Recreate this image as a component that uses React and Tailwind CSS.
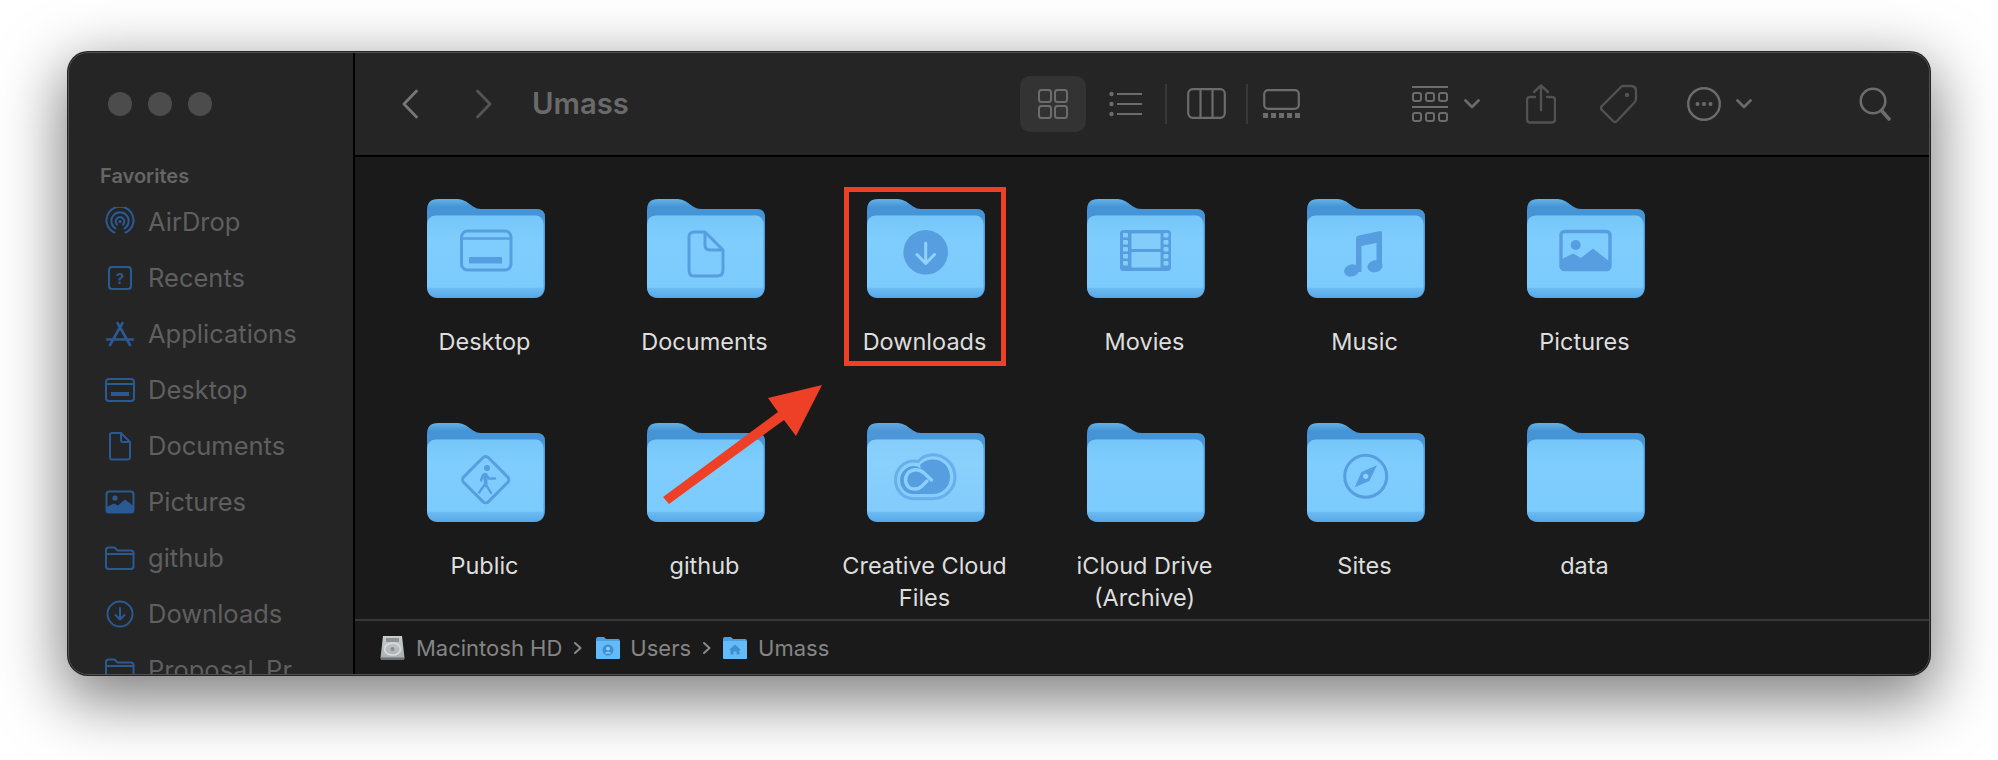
import React from "react";

const F = { fontFamily: "Inter, 'Noto Sans', sans-serif" };
const BLUE = "#2a5a94";
const G = "#6c6c6c";
const D = "#525252";
const I = "#569ee0";

function Glyph({ name }) {
  switch (name) {
    case "desktop":
      return (
        <g fill="none" stroke={I} strokeWidth="3">
          <rect x="34.5" y="32" width="49.5" height="39" rx="6" />
          <path d="M35 39.5H84" strokeWidth="2.4" />
          <rect x="42" y="58" width="33" height="6.6" rx="1.2" fill={I} stroke="none" />
        </g>
      );
    case "doc":
      return (
        <g fill="none" stroke={I} strokeWidth="3" strokeLinejoin="round">
          <path d="M47 33H58L76 51V71Q76 77 70 77H47Q42 77 42 71V38Q42 33 47 33Z" />
          <path d="M58 34V46Q58 51 63 51H75" />
        </g>
      );
    case "download":
      return (
        <g>
          <circle cx="58.7" cy="53.3" r="22.3" fill={I} />
          <path d="M58.7 44V64M50 55.5L58.7 64.5L67.5 55.5" fill="none" stroke="#8ed3ff" strokeWidth="3" strokeLinecap="round" strokeLinejoin="round" />
        </g>
      );
    case "movie":
      return (
        <g>
          <rect x="33" y="31" width="51" height="41" rx="3.5" fill={I} />
          <rect x="44.5" y="34.5" width="29" height="15.5" fill="#84cdfb" />
          <rect x="44.5" y="53" width="29" height="15.5" fill="#84cdfb" />
          {[34, 41, 48, 55, 62].map((y) => (
            <g key={y} fill="#84cdfb">
              <rect x="36" y={y} width="5" height="4.6" rx="1" />
              <rect x="76.5" y={y} width="5" height="4.6" rx="1" />
            </g>
          ))}
        </g>
      );
    case "music":
      return (
        <g fill={I}>
          <path d="M49 40Q49 37 52 36.6L73 32Q75 31.6 75 34V69H69.5V44L54.5 47V73H49Z" />
          <ellipse cx="44.6" cy="71.5" rx="7.6" ry="6" transform="rotate(-15 44.6 71.5)" />
          <ellipse cx="68" cy="67.3" rx="7.6" ry="6" transform="rotate(-15 68 67.3)" />
        </g>
      );
    case "picture":
      return (
        <g>
          <rect x="34" y="32.5" width="49" height="38" rx="3.5" fill="none" stroke={I} strokeWidth="3.4" />
          <circle cx="48.7" cy="46" r="5" fill={I} />
          <path d="M35 60L46 54.5L54 59L66 49.5L83 63V70H35Z" fill={I} />
        </g>
      );
    case "public":
      return (
        <g>
          <rect x="41.2" y="39.2" width="35" height="35" rx="4" transform="rotate(45 58.7 56.7)" fill="none" stroke={I} strokeWidth="3" />
          <circle cx="60" cy="45" r="3" fill={I} />
          <path d="M58 51L58.5 63M60 53L62 55.5H68M57.5 62L52 69.5M58.5 60.5L64 70M56 52L54 57.5" fill="none" stroke={I} strokeWidth="2.4" strokeLinecap="round" />
          <path d="M56 50.5H60.5L60.5 62H57Z" fill={I} />
        </g>
      );
    case "cc":
      return (
        <g>
          <path d="M46 75.7C36 75.7 28.5 67 28.5 57C28.5 46 37 38 47 38C49 38 50 38.3 51 38.6C55 34 60 31.7 66 31.7C78 31.7 88 41.5 88 54C88 66 78 75.7 66 75.7Z" fill="none" stroke="#67b0ea" strokeWidth="3" />
          <path d="M53 42C57 38 61 36.5 66 36.5C76 36.5 83 44 83 54C83 64 75 71 66 71H46C38 71 33 64 33 57C33 49 40 43 47 43C50 43 52 44 54 46Z" fill={I} />
          <path d="M64.5 57L57 50C52 45.5 45 46 41 50C37 55 38 62 43 65C48 67 52 66 55 63L60 58" fill="none" stroke="#8bd0ff" strokeWidth="3.4" strokeLinecap="round" />
        </g>
      );
    case "compass":
      return (
        <g>
          <circle cx="58.7" cy="53.3" r="21" fill="none" stroke={I} strokeWidth="3" />
          <path d="M70 42.3L62.5 58L47.7 64.3L54.5 49Z" fill={I} />
          <circle cx="58.7" cy="53.3" r="2.6" fill="#8ed3ff" />
        </g>
      );
    default:
      return null;
  }
}

function Folder({ id, glyph, light }) {
  return (
    <svg width="118" height="99" viewBox="0 0 118 99" className="block shrink-0">
      <defs>
        <linearGradient id={`b${id}`} x1="0" y1="0" x2="0" y2="1">
          <stop offset="0" stopColor={light ? "#64a9de" : "#63b2e6"} />
          <stop offset="0.2" stopColor={light ? "#4d97d8" : "#4594d6"} />
          <stop offset="1" stopColor="#4594d6" />
        </linearGradient>
        <linearGradient id={`f${id}`} x1="0" y1="0" x2="0" y2="1">
          <stop offset="0" stopColor={light ? "#86cdfb" : "#76c6f9"} />
          <stop offset="0.3" stopColor={light ? "#8ad0fd" : "#7ecdfd"} />
          <stop offset="0.87" stopColor={light ? "#82cbfb" : "#7ccbfd"} />
          <stop offset="0.88" stopColor="#6cbcf3" />
          <stop offset="1" stopColor="#55a7e5" />
        </linearGradient>
      </defs>
      <path d="M0 11Q0 0 11 0H31Q35 0 39 2.5L46 7.5Q50 10 54 10H110Q118 10 118 18V40H0Z" fill={`url(#b${id})`} />
      <path d="M0 26Q0 17 9 16.5H109Q117 17 118 26V87Q118 99 106 99H12Q0 99 0 87Z" fill="#4ea0e2" />
      <path d="M0 26Q0 17 9 16.5H109Q116 17 116.5 26V87Q118 99 106 99H12Q0 99 0 87Z" fill={`url(#f${id})`} />
      <Glyph name={glyph} />
    </svg>
  );
}

const items = [
  { n: "Desktop", g: "desktop" },
  { n: "Documents", g: "doc" },
  { n: "Downloads", g: "download" },
  { n: "Movies", g: "movie" },
  { n: "Music", g: "music" },
  { n: "Pictures", g: "picture" },
  { n: "Public", g: "public" },
  { n: "github" },
  { n: "Creative Cloud Files", g: "cc", light: true },
  { n: "iCloud Drive (Archive)" },
  { n: "Sites", g: "compass" },
  { n: "data" },
];

function SideIcon({ name }) {
  const p = { fill: "none", stroke: BLUE, strokeWidth: 2, strokeLinecap: "round", strokeLinejoin: "round" };
  let c = null;
  if (name === "air")
    c = (
      <g {...p}>
        <path d="M9.5 25.5A13.5 13.5 0 1 1 20.5 25.5" />
        <path d="M10.5 21.5A8.7 8.7 0 1 1 19.5 21.5" />
        <path d="M12 17.5A4.3 4.3 0 1 1 18 17.5" />
        <circle cx="15" cy="14.5" r="1.5" fill={BLUE} stroke="none" />
      </g>
    );
  if (name === "recent")
    c = (
      <g>
        <rect x="4" y="4" width="22" height="22" rx="3" {...p} />
        <text x="15" y="21" textAnchor="middle" fontSize="15" fontWeight="700" fill={BLUE} style={F}>?</text>
      </g>
    );
  if (name === "app")
    c = (
      <g {...p} strokeWidth="2.6">
        <path d="M17.5 4L5 26M12.5 4L25 26M2 20.5H28" />
      </g>
    );
  if (name === "desk")
    c = (
      <g {...p}>
        <rect x="1" y="4" width="28" height="22" rx="3" />
        <path d="M1 9H29" />
        <rect x="6" y="17" width="18" height="4" fill={BLUE} stroke="none" />
      </g>
    );
  if (name === "doc")
    c = (
      <g {...p}>
        <path d="M7 2H16L25 11V26Q25 28.5 22 28.5H7Q5 28.5 5 26V4Q5 2 7 2Z" />
        <path d="M16 2.5V9Q16 11 18 11H24.5" />
      </g>
    );
  if (name === "pic")
    c = (
      <g>
        <rect x="1.5" y="4.5" width="27" height="21" rx="2.5" {...p} />
        <circle cx="10" cy="11" r="2.6" fill={BLUE} />
        <path d="M1.5 20L9 16.5L13 18.5L20 12.5L28.5 19V24Q28.5 26 26 26H4Q1.5 26 1.5 24Z" fill={BLUE} />
      </g>
    );
  if (name === "folder")
    c = (
      <g {...p}>
        <path d="M1 9V7Q1 4.5 3.5 4.5H9.5L12.5 7.5H26Q28.5 7.5 28.5 10V23Q28.5 26 26 26H3.5Q1 26 1 23Z" />
        <path d="M1 11H28.5" />
      </g>
    );
  if (name === "dl")
    c = (
      <g {...p}>
        <circle cx="15" cy="15" r="12.5" />
        <path d="M15 9V20M10.5 16L15 20.5L19.5 16" />
      </g>
    );
  return (
    <svg width="30" height="30" viewBox="0 0 30 30" className="shrink-0 block">
      {c}
    </svg>
  );
}

const side = [
  ["air", "AirDrop"],
  ["recent", "Recents"],
  ["app", "Applications"],
  ["desk", "Desktop"],
  ["doc", "Documents"],
  ["pic", "Pictures"],
  ["folder", "github"],
  ["dl", "Downloads"],
  ["folder", "Proposal_Pr"],
];

function Chevron({ color, className }) {
  return (
    <svg width="16" height="10" viewBox="0 0 16 10" className={className}>
      <path d="M1.5 1.5L8 8L14.5 1.5" fill="none" stroke={color} strokeWidth="2.6" strokeLinecap="round" strokeLinejoin="round" />
    </svg>
  );
}

function MiniFolder({ glyph }) {
  return (
    <svg width="24" height="24" viewBox="0 0 24 24" className="shrink-0 block">
      <path d="M0 3Q0 1 2 1H8L10 3H22Q24 3 24 5V8H0Z" fill="#4b9fe3" />
      <path d="M0 5H24V22Q24 23 23 23H1Q0 23 0 22Z" fill="#63bbf8" />
      {glyph === "user" ? (
        <g>
          <circle cx="12" cy="14" r="5.5" fill="#3f8fd2" />
          <circle cx="12" cy="12.6" r="1.9" fill="#8ed3ff" />
          <path d="M8.5 17.5Q12 13.8 15.5 17.5Z" fill="#8ed3ff" />
        </g>
      ) : (
        <path d="M12 8.5L18 14H16.5V18.5H13.5V15.5H10.5V18.5H7.5V14H6Z" fill="#3f8fd2" />
      )}
    </svg>
  );
}

function Crumb({ className }) {
  return (
    <svg width="10" height="14" viewBox="0 0 10 14" className={className}>
      <path d="M2 2L7.5 7L2 12" fill="none" stroke="#8a8a8a" strokeWidth="2" strokeLinecap="round" strokeLinejoin="round" />
    </svg>
  );
}

export default function App() {
  return (
    <div className="relative w-[1998px] h-[760px] bg-white overflow-hidden pl-[68px] pt-[52px]" style={F}>
      <div className="relative flex w-[1862px] h-[623px] rounded-[20px] overflow-hidden bg-[#1a1a1a] shadow-[0_0_0_1px_#242424,0_20px_62px_6px_rgba(0,0,0,0.5)]">
        {/* Sidebar */}
        <aside className="w-[287px] shrink-0 bg-[#252525] border-r-2 border-black pt-[40px] overflow-hidden">
          <div className="flex gap-4 pl-[40px]">
            <div className="w-6 h-6 rounded-full bg-[#4c4c4c]" />
            <div className="w-6 h-6 rounded-full bg-[#4c4c4c]" />
            <div className="w-6 h-6 rounded-full bg-[#4c4c4c]" />
          </div>
          <div className="mt-[46px] pl-[32px] h-7 leading-7 text-[20px] font-semibold text-[#666666]">Favorites</div>
          <div className="mt-1">
            {side.map(([ic, t], i) => (
              <div key={i} className="flex items-center h-14 pl-[37px] gap-[13px]">
                <SideIcon name={ic} />
                <span className="text-[25.5px] text-[#5f5f5f] whitespace-nowrap">{t}</span>
              </div>
            ))}
          </div>
        </aside>

        <div className="flex-1 min-w-0 flex flex-col">
          {/* Toolbar */}
          <header className="h-[105px] shrink-0 flex items-center bg-[#252525] border-b-2 border-black pr-[39px]">
            <svg width="18" height="30" viewBox="0 0 18 30" className="ml-[46px] shrink-0">
              <path d="M15.5 2L3 15L15.5 28" fill="none" stroke="#777777" strokeWidth="2.8" strokeLinecap="round" strokeLinejoin="round" />
            </svg>
            <svg width="18" height="30" viewBox="0 0 18 30" className="ml-[56px] shrink-0">
              <path d="M2.5 2L15 15L2.5 28" fill="none" stroke="#555555" strokeWidth="2.8" strokeLinecap="round" strokeLinejoin="round" />
            </svg>
            <div className="ml-[39px] flex-1 text-[29.3px] font-semibold text-[#6a6a6a]">Umass</div>

            <div className="w-[66px] h-14 rounded-[10px] bg-[#333333] flex items-center justify-center shrink-0">
              <svg width="30" height="30" viewBox="0 0 30 30">
                <g fill="none" stroke={G} strokeWidth="2">
                  <rect x="1" y="1" width="12" height="12" rx="2.5" />
                  <rect x="17" y="1" width="12" height="12" rx="2.5" />
                  <rect x="1" y="17" width="12" height="12" rx="2.5" />
                  <rect x="17" y="17" width="12" height="12" rx="2.5" />
                </g>
              </svg>
            </div>
            <svg width="33" height="26" viewBox="0 0 33 26" className="ml-[23px] shrink-0">
              <g fill={G}>
                <circle cx="2.5" cy="3" r="2.2" />
                <circle cx="2.5" cy="13" r="2.2" />
                <circle cx="2.5" cy="23" r="2.2" />
                <rect x="8" y="2" width="25" height="2" />
                <rect x="8" y="12" width="25" height="2" />
                <rect x="8" y="22" width="25" height="2" />
              </g>
            </svg>
            <div className="ml-[23px] w-[2px] h-10 bg-[#383838] shrink-0" />
            <svg width="39" height="31" viewBox="0 0 39 31" className="ml-5 shrink-0">
              <g fill="none" stroke={G} strokeWidth="2.2">
                <rect x="1.2" y="1.2" width="36.6" height="28.6" rx="4.5" />
                <path d="M13.5 1V30M25.5 1V30" />
              </g>
            </svg>
            <div className="ml-5 w-[2px] h-10 bg-[#383838] shrink-0" />
            <svg width="37" height="29" viewBox="0 0 37 29" className="ml-[15px] shrink-0">
              <rect x="1.2" y="1.2" width="34.6" height="18.6" rx="4" fill="none" stroke={G} strokeWidth="2.2" />
              <g fill={G}>
                {[0, 8, 16, 24, 32].map((x) => (
                  <rect key={x} x={x} y="24" width="5" height="5" />
                ))}
              </g>
            </svg>
            <svg width="36" height="37" viewBox="0 0 36 37" className="ml-[112px] shrink-0">
              <g fill="none" stroke={D} strokeWidth="2">
                <path d="M0 2H36M0 22H36" strokeWidth="2" stroke={G} />
                {[0, 13, 26].map((x) => (
                  <g key={x}>
                    <rect x={x + 1} y="8" width="8" height="8" rx="2" stroke={G} />
                    <rect x={x + 1} y="28" width="8" height="8" rx="2" stroke={G} />
                  </g>
                ))}
              </g>
            </svg>
            <Chevron color={G} className="ml-4 shrink-0" />
            <svg width="30" height="40" viewBox="0 0 30 40" className="ml-[46px] shrink-0">
              <g fill="none" stroke={D} strokeWidth="2.4" strokeLinecap="round" strokeLinejoin="round">
                <path d="M9 13H4Q1 13 1 16V35Q1 38.5 4 38.5H26Q29 38.5 29 35V16Q29 13 26 13H21" />
                <path d="M15 26V2M8 8L15 1.5L22 8" />
              </g>
            </svg>
            <svg width="38" height="40" viewBox="0 0 38 40" className="ml-[44px] shrink-0">
              <g fill="none" stroke={D} strokeWidth="2.4" strokeLinejoin="round">
                <path d="M23 2H31Q36 2 36 7V15Q36 17 34 19L17 37Q15 39 13 37L2 26Q0 24 2 22L20 4Q21 2 23 2Z" />
              </g>
              <circle cx="27" cy="11" r="2.2" fill={D} />
            </svg>
            <svg width="34" height="36" viewBox="0 0 34 36" className="ml-[49px] shrink-0">
              <circle cx="17" cy="18" r="15.8" fill="none" stroke={G} strokeWidth="2.4" />
              <g fill={G}>
                <circle cx="10.5" cy="18" r="2" />
                <circle cx="17" cy="18" r="2" />
                <circle cx="23.5" cy="18" r="2" />
              </g>
            </svg>
            <Chevron color={G} className="ml-[15px] shrink-0" />
            <svg width="32" height="36" viewBox="0 0 32 36" className="ml-[107px] shrink-0">
              <circle cx="14" cy="15" r="12.3" fill="none" stroke={G} strokeWidth="2.6" />
              <path d="M22.5 24.5L30 33" stroke={G} strokeWidth="3.6" strokeLinecap="round" />
            </svg>
          </header>

          {/* Icon grid */}
          <main className="flex-1 min-h-0 overflow-hidden pl-[21px] pt-[42px] grid grid-cols-[repeat(6,220px)] auto-rows-[224px]">
            {items.map((it, i) => (
              <div key={i} className="flex flex-col items-center">
                <Folder id={i} glyph={it.g} light={it.light} />
                <div className="mt-7 w-[180px] pr-[3px] text-center text-[23.5px] leading-8 font-normal text-[#dedede]">{it.n}</div>
              </div>
            ))}
          </main>

          {/* Path bar */}
          <footer className="h-[56px] shrink-0 flex items-center border-t-2 border-[#383838] bg-[#1a1a1a] pl-[25px] text-[22px] text-[#858585]">
            <svg width="25" height="26" viewBox="0 0 25 26" className="shrink-0 block">
              <defs>
                <linearGradient id="hd" x1="0" y1="0" x2="0" y2="1">
                  <stop offset="0" stopColor="#c9cccd" />
                  <stop offset="1" stopColor="#a7adb0" />
                </linearGradient>
              </defs>
              <path d="M3 1H22L24.5 23Q24.5 25 22.5 25H2.5Q0.5 25 0.5 23Z" fill="url(#hd)" />
              <rect x="6" y="3" width="13" height="4" fill="#8d9194" />
              <ellipse cx="12.5" cy="14" rx="8" ry="6" fill="none" stroke="#d9dcdd" strokeWidth="1.6" />
              <circle cx="12.5" cy="14" r="2" fill="#888c8f" />
              <rect x="1" y="22.5" width="23" height="2.5" fill="#6c7073" />
            </svg>
            <span className="ml-[11px] whitespace-nowrap">Macintosh HD</span>
            <Crumb className="ml-[11px] shrink-0" />
            <span className="ml-[13px]"><MiniFolder glyph="user" /></span>
            <span className="ml-[10px]">Users</span>
            <Crumb className="ml-[11px] shrink-0" />
            <span className="ml-[11px]"><MiniFolder glyph="home" /></span>
            <span className="ml-[11px]">Umass</span>
          </footer>
        </div>
        <div className="absolute inset-0 rounded-[20px] border border-[#505050] pointer-events-none" />
      </div>

      {/* Annotations */}
      <div className="absolute left-[844px] top-[187px] w-[162px] h-[179px] border-[5px] border-[#ee4026]" />
      <svg className="absolute left-[650px] top-[370px]" width="190" height="145" viewBox="0 0 190 145">
        <path d="M13 127L19 134L134 50L146 66L172 15L118 28L128 42Z" fill="#ee4026" />
      </svg>
    </div>
  );
}
